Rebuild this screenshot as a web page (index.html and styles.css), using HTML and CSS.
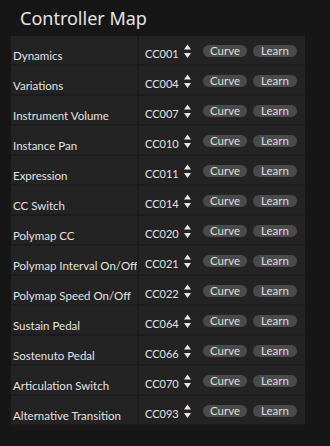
FILE: index.html
```html
<!DOCTYPE html>
<html>
<head>
  <meta charset="utf-8">
  <title>Controller Map</title>
  <link rel="stylesheet" href="styles.css">
</head>
<body>
  <div class="panel">
    <h1 class="panel-title">Controller Map</h1>

    <div class="cc-map">
      <div class="cc-row">
        <div class="cc-name">Dynamics</div>
        <div class="cc-ctrl">
          <span class="cc-num">CC001</span>
          <svg class="spin" width="7" height="15" viewBox="0 0 7 15"><path d="M3.5 0.5 L7 5.5 L0 5.5 Z M0 9 L7 9 L3.5 14 Z" fill="#e6e6e6"/></svg>
          <span class="btns"><span class="pill">Curve</span><span class="pill">Learn</span></span>
        </div>
      </div>
      <div class="cc-row">
        <div class="cc-name">Variations</div>
        <div class="cc-ctrl">
          <span class="cc-num">CC004</span>
          <svg class="spin" width="7" height="15" viewBox="0 0 7 15"><path d="M3.5 0.5 L7 5.5 L0 5.5 Z M0 9 L7 9 L3.5 14 Z" fill="#e6e6e6"/></svg>
          <span class="btns"><span class="pill">Curve</span><span class="pill">Learn</span></span>
        </div>
      </div>
      <div class="cc-row">
        <div class="cc-name">Instrument Volume</div>
        <div class="cc-ctrl">
          <span class="cc-num">CC007</span>
          <svg class="spin" width="7" height="15" viewBox="0 0 7 15"><path d="M3.5 0.5 L7 5.5 L0 5.5 Z M0 9 L7 9 L3.5 14 Z" fill="#e6e6e6"/></svg>
          <span class="btns"><span class="pill">Curve</span><span class="pill">Learn</span></span>
        </div>
      </div>
      <div class="cc-row">
        <div class="cc-name">Instance Pan</div>
        <div class="cc-ctrl">
          <span class="cc-num">CC010</span>
          <svg class="spin" width="7" height="15" viewBox="0 0 7 15"><path d="M3.5 0.5 L7 5.5 L0 5.5 Z M0 9 L7 9 L3.5 14 Z" fill="#e6e6e6"/></svg>
          <span class="btns"><span class="pill">Curve</span><span class="pill">Learn</span></span>
        </div>
      </div>
      <div class="cc-row">
        <div class="cc-name">Expression</div>
        <div class="cc-ctrl">
          <span class="cc-num">CC011</span>
          <svg class="spin" width="7" height="15" viewBox="0 0 7 15"><path d="M3.5 0.5 L7 5.5 L0 5.5 Z M0 9 L7 9 L3.5 14 Z" fill="#e6e6e6"/></svg>
          <span class="btns"><span class="pill">Curve</span><span class="pill">Learn</span></span>
        </div>
      </div>
      <div class="cc-row">
        <div class="cc-name">CC Switch</div>
        <div class="cc-ctrl">
          <span class="cc-num">CC014</span>
          <svg class="spin" width="7" height="15" viewBox="0 0 7 15"><path d="M3.5 0.5 L7 5.5 L0 5.5 Z M0 9 L7 9 L3.5 14 Z" fill="#e6e6e6"/></svg>
          <span class="btns"><span class="pill">Curve</span><span class="pill">Learn</span></span>
        </div>
      </div>
      <div class="cc-row">
        <div class="cc-name">Polymap CC</div>
        <div class="cc-ctrl">
          <span class="cc-num">CC020</span>
          <svg class="spin" width="7" height="15" viewBox="0 0 7 15"><path d="M3.5 0.5 L7 5.5 L0 5.5 Z M0 9 L7 9 L3.5 14 Z" fill="#e6e6e6"/></svg>
          <span class="btns"><span class="pill">Curve</span><span class="pill">Learn</span></span>
        </div>
      </div>
      <div class="cc-row">
        <div class="cc-name">Polymap Interval On/Off</div>
        <div class="cc-ctrl">
          <span class="cc-num">CC021</span>
          <svg class="spin" width="7" height="15" viewBox="0 0 7 15"><path d="M3.5 0.5 L7 5.5 L0 5.5 Z M0 9 L7 9 L3.5 14 Z" fill="#e6e6e6"/></svg>
          <span class="btns"><span class="pill">Curve</span><span class="pill">Learn</span></span>
        </div>
      </div>
      <div class="cc-row">
        <div class="cc-name">Polymap Speed On/Off</div>
        <div class="cc-ctrl">
          <span class="cc-num">CC022</span>
          <svg class="spin" width="7" height="15" viewBox="0 0 7 15"><path d="M3.5 0.5 L7 5.5 L0 5.5 Z M0 9 L7 9 L3.5 14 Z" fill="#e6e6e6"/></svg>
          <span class="btns"><span class="pill">Curve</span><span class="pill">Learn</span></span>
        </div>
      </div>
      <div class="cc-row">
        <div class="cc-name">Sustain Pedal</div>
        <div class="cc-ctrl">
          <span class="cc-num">CC064</span>
          <svg class="spin" width="7" height="15" viewBox="0 0 7 15"><path d="M3.5 0.5 L7 5.5 L0 5.5 Z M0 9 L7 9 L3.5 14 Z" fill="#e6e6e6"/></svg>
          <span class="btns"><span class="pill">Curve</span><span class="pill">Learn</span></span>
        </div>
      </div>
      <div class="cc-row">
        <div class="cc-name">Sostenuto Pedal</div>
        <div class="cc-ctrl">
          <span class="cc-num">CC066</span>
          <svg class="spin" width="7" height="15" viewBox="0 0 7 15"><path d="M3.5 0.5 L7 5.5 L0 5.5 Z M0 9 L7 9 L3.5 14 Z" fill="#e6e6e6"/></svg>
          <span class="btns"><span class="pill">Curve</span><span class="pill">Learn</span></span>
        </div>
      </div>
      <div class="cc-row">
        <div class="cc-name">Articulation Switch</div>
        <div class="cc-ctrl">
          <span class="cc-num">CC070</span>
          <svg class="spin" width="7" height="15" viewBox="0 0 7 15"><path d="M3.5 0.5 L7 5.5 L0 5.5 Z M0 9 L7 9 L3.5 14 Z" fill="#e6e6e6"/></svg>
          <span class="btns"><span class="pill">Curve</span><span class="pill">Learn</span></span>
        </div>
      </div>
      <div class="cc-row">
        <div class="cc-name">Alternative Transition</div>
        <div class="cc-ctrl">
          <span class="cc-num">CC093</span>
          <svg class="spin" width="7" height="15" viewBox="0 0 7 15"><path d="M3.5 0.5 L7 5.5 L0 5.5 Z M0 9 L7 9 L3.5 14 Z" fill="#e6e6e6"/></svg>
          <span class="btns"><span class="pill">Curve</span><span class="pill">Learn</span></span>
        </div>
      </div>
    </div>
  </div>
</body>
</html>
```

FILE: styles.css
```css
/* Controller map panel */
html, body {
  margin: 0;
  height: 100%;
  background: #151515;
}

body {
  font-family: Lato, "Noto Sans", sans-serif;
  color: #e2e2e2;
}

.panel {
  width: 330px;
  height: 446px;
  background: #161616;
}

.panel-title {
  margin: 0;
  height: 36px;
  padding-left: 20px;
  font-family: "Noto Sans", sans-serif;
  font-size: 18px;
  font-weight: 400;
  line-height: 36px;
  color: #e4e4e4;
}

/* Table */
.cc-map {
  margin-left: 11px;
  width: 294px;
}

.cc-row {
  display: grid;
  grid-template-columns: 126px 166px;
  column-gap: 2px;
  height: 28px;
  background: #1b1b1b;
  border-bottom: 2px solid #1b1b1b;
}

.cc-name,
.cc-ctrl {
  background: #232323;
}

.cc-name {
  display: flex;
  align-items: flex-end;
  padding: 0 0 2px 2px;
  font-size: 11.5px;
  white-space: nowrap;
  overflow: hidden;
}

.cc-ctrl {
  display: flex;
  align-items: center;
  padding: 0 8px 0 6px;
}

.cc-num {
  font-size: 11px;
  margin-top: 6px;
}

.spin {
  margin-left: 5px;
  margin-top: 2px;
}

.btns {
  display: flex;
  gap: 6px;
  margin-left: auto;
  margin-top: 1px;
}

.pill {
  width: 44px;
  height: 12px;
  border-radius: 6px;
  background: #4a4a4a;
  color: #dcdcdc;
  font-size: 11.5px;
  line-height: 12px;
  text-align: center;
}
```
